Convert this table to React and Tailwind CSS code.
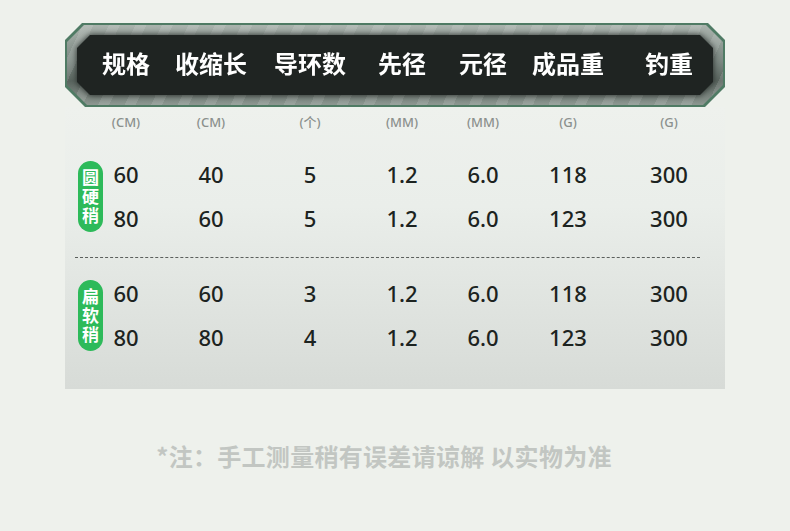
import React from "react";

const cols = ["w-[42px]", "w-[128px]", "w-[70px]", "w-[114px]", "w-[48px]", "w-[122px]", "w-[80px]"];
const heads = ["规格", "收缩长", "导环数", "先径", "元径", "成品重", "钓重"];
const units = ["(CM)", "(CM)", "(个)", "(MM)", "(MM)", "(G)", "(G)"];

const groups = [
  {
    name: "圆硬稍",
    rows: [
      ["60", "40", "5", "1.2", "6.0", "118", "300"],
      ["80", "60", "5", "1.2", "6.0", "123", "300"],
    ],
  },
  {
    name: "扁软稍",
    rows: [
      ["60", "60", "3", "1.2", "6.0", "118", "300"],
      ["80", "80", "4", "1.2", "6.0", "123", "300"],
    ],
  },
];

const outer =
  "[clip-path:polygon(17px_0,calc(100%_-_17px)_0,100%_17px,100%_calc(100%_-_20px),calc(100%_-_20px)_100%,20px_100%,0_calc(100%_-_20px),0_17px)]";
const inner =
  "[clip-path:polygon(13px_0,calc(100%_-_13px)_0,100%_13px,100%_calc(100%_-_13px),calc(100%_-_13px)_100%,13px_100%,0_calc(100%_-_13px),0_13px)]";

const Cells = ({ values, className }) => (
  <div className="flex">
    {values.map((v, i) => (
      <div key={i} className={`${cols[i]} shrink-0 flex justify-center whitespace-nowrap ${className}`}>
        {v}
      </div>
    ))}
  </div>
);

const App = () => {
  return (
    <div className="w-[790px] h-[531px] bg-[#eef1ec] overflow-hidden font-['Noto_Sans','Noto_Sans_CJK_SC',sans-serif]">
      <div className="ml-[65px] w-[660px] pt-[23px]">
        {/* banner */}
        <div className={`h-[84px] bg-[#4f7b64] p-[2px] ${outer}`}>
          <div
            className={`h-full px-[10px] py-[10px] bg-[repeating-linear-gradient(115deg,rgba(255,255,255,0)_0px,rgba(255,255,255,0)_14px,rgba(255,255,255,0.12)_14px,rgba(255,255,255,0.12)_24px),linear-gradient(180deg,#aab3ad_0%,#7c8882_45%,#59645e_70%,#8d9791_100%)] ${outer}`}
          >
            <div className="h-full [filter:drop-shadow(0_0_3px_#1f2422)]">
              <div className={`h-full bg-[#1f2422] flex items-center pb-[4px] ${inner}`}>
                <div className="flex pl-[28px]">
                  {heads.map((h, i) => (
                    <div
                      key={i}
                      className={`${cols[i]} shrink-0 flex justify-center whitespace-nowrap text-white text-[24px] font-bold font-['Noto_Sans_CJK_SC',sans-serif] leading-none`}
                    >
                      {h}
                    </div>
                  ))}
                </div>
              </div>
            </div>
          </div>
        </div>

        {/* body */}
        <div className="bg-[linear-gradient(180deg,#eef1ed_0%,#eaeeea_35%,#d7dbd7_100%)] pb-[30px]">
          <div className="flex pl-[40px] h-[32px] items-center">
            <Cells values={units} className="text-[13px] text-[#8b908d] font-medium" />
          </div>

          {groups.map((g, gi) => (
            <React.Fragment key={gi}>
              {gi > 0 && (
                <div className="mt-[17px] mb-[13px] ml-[10px] mr-[25px] border-t border-dashed border-[#5b5f5c]" />
              )}
              <div className={`flex items-center ${gi === 0 ? "mt-[13px]" : ""}`}>
                <div className="w-[40px] shrink-0 pl-[13px]">
                  <div className="w-[25px] h-[71px] rounded-full bg-[#2dba5a] flex items-center justify-center">
                    <span className="[writing-mode:vertical-rl] text-white text-[17px] font-bold leading-none tracking-[2px] font-['Noto_Sans_CJK_SC',sans-serif] mt-[2px]">
                      {g.name}
                    </span>
                  </div>
                </div>
                <div>
                  {g.rows.map((r, ri) => (
                    <div key={ri} className="h-[44px] flex items-center">
                      <Cells values={r} className="text-[22px] font-medium text-[#1c2320]" />
                    </div>
                  ))}
                </div>
              </div>
            </React.Fragment>
          ))}
        </div>
      </div>

      <div className="mt-[55px] pr-[22px] text-center text-[24px] tracking-[0.3px] font-bold text-[#c2c6c2] font-['Noto_Sans_CJK_SC',sans-serif] leading-none">
        *注：手工测量稍有误差请谅解 以实物为准
      </div>
    </div>
  );
};

export default App;
